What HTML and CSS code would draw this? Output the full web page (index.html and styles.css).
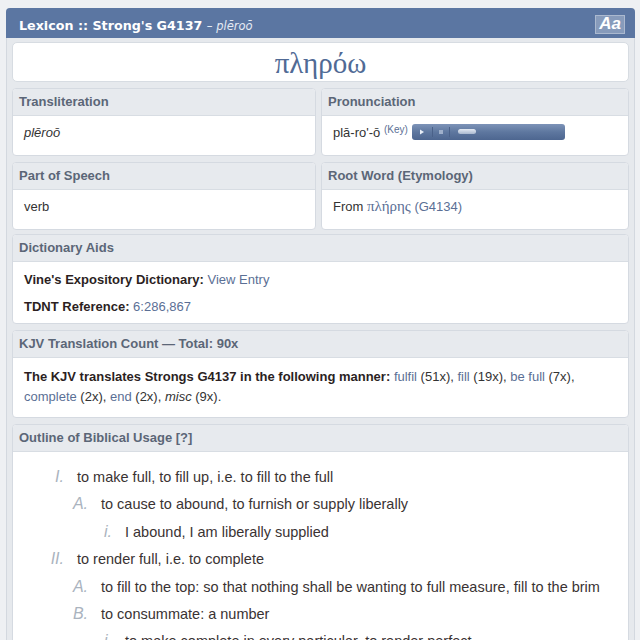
FILE: index.html
```html
<!DOCTYPE html>
<html lang="en">
<head>
<meta charset="utf-8">
<title>Lexicon :: Strong's G4137 - plēroō</title>
<link rel="stylesheet" href="styles.css">
</head>
<body>
<div class="lexicon">
  <div class="lex-head">
    <span class="lex-title">Lexicon :: Strong's G4137 <i class="lex-translit">– plēroō</i></span>
    <span class="aa-btn">Aa</span>
  </div>
  <div class="lex-body">
    <div class="word-card"><span class="greek-word">πληρόω</span></div>

    <div class="grid2">
      <div class="card">
        <div class="card-h">Transliteration</div>
        <div class="card-b"><i>plēroō</i></div>
      </div>
      <div class="card">
        <div class="card-h">Pronunciation</div>
        <div class="card-b">plā-ro'-ō <sup class="key">(Key)</sup>
          <svg class="player" width="153" height="16" viewBox="0 0 153 16">
            <defs>
              <linearGradient id="pg" x1="0" y1="0" x2="0" y2="1">
                <stop offset="0" stop-color="#7d93b8"/>
                <stop offset="0.5" stop-color="#5e779f"/>
                <stop offset="1" stop-color="#4d6690"/>
              </linearGradient>
              <linearGradient id="kg" x1="0" y1="0" x2="0" y2="1">
                <stop offset="0" stop-color="#e4eaf3"/>
                <stop offset="1" stop-color="#a9b8cf"/>
              </linearGradient>
            </defs>
            <rect x="0" y="0" width="153" height="16" rx="3" fill="url(#pg)"/>
            <path d="M8 5.5 L12 8 L8 10.5 Z" fill="#e8eef7"/>
            <line x1="20.5" y1="3" x2="20.5" y2="13" stroke="#4a6189" stroke-width="1"/>
            <rect x="27" y="6" width="4" height="4" fill="#9fb0cb"/>
            <line x1="37.5" y1="3" x2="37.5" y2="13" stroke="#4a6189" stroke-width="1"/>
            <rect x="46" y="5" width="18" height="5" rx="2.5" fill="url(#kg)"/>
          </svg>
        </div>
      </div>
      <div class="card">
        <div class="card-h">Part of Speech</div>
        <div class="card-b">verb</div>
      </div>
      <div class="card">
        <div class="card-h">Root Word (Etymology)</div>
        <div class="card-b">From <a class="link greek-link" href="#">πλήρης</a> <a class="link" href="#">(G4134)</a></div>
      </div>
    </div>

    <div class="card">
      <div class="card-h">Dictionary Aids</div>
      <div class="card-b aids">
        <p><b>Vine's Expository Dictionary:</b> <a class="link" href="#">View Entry</a></p>
        <p><b>TDNT Reference:</b> <a class="link" href="#">6:286,867</a></p>
      </div>
    </div>

    <div class="card">
      <div class="card-h">KJV Translation Count — Total: 90x</div>
      <div class="card-b kjv">
        <b>The KJV translates Strongs G4137 in the following manner:</b> <a class="link" href="#">fulfil</a> (51x), <a class="link" href="#">fill</a> (19x), <a class="link" href="#">be full</a> (7x), <a class="link" href="#">complete</a> (2x), <a class="link" href="#">end</a> (2x), <i>misc</i> (9x).
      </div>
    </div>

    <div class="card">
      <div class="card-h">Outline of Biblical Usage [?]</div>
      <div class="card-b outline">
        <ol class="lvl1">
          <li>to make full, to fill up, i.e. to fill to the full
            <ol class="lvl2">
              <li>to cause to abound, to furnish or supply liberally
                <ol class="lvl3">
                  <li>I abound, I am liberally supplied</li>
                </ol>
              </li>
            </ol>
          </li>
          <li>to render full, i.e. to complete
            <ol class="lvl2">
              <li>to fill to the top: so that nothing shall be wanting to full measure, fill to the brim</li>
              <li>to consummate: a number
                <ol class="lvl3">
                  <li>to make complete in every particular, to render perfect</li>
                </ol>
              </li>
            </ol>
          </li>
        </ol>
      </div>
    </div>
  </div>
</div>
</body>
</html>
```
FILE: styles.css
```css
html, body {
  margin: 0;
  padding: 0;
}
body {
  background: #eef0f3;
  font-family: "Liberation Sans", Arial, sans-serif;
  font-size: 13px;
  color: #333;
  overflow: hidden;
  height: 640px;
}
.lexicon {
  margin: 8px 5px 0 6px;
  border: 1px solid #d3d8df;
  border-top: none;
  border-radius: 4px 4px 0 0;
  background: #e6e9ed;
}
.lex-head {
  height: 30px;
  display: flex;
  align-items: center;
  justify-content: space-between;
  padding: 0 10px 0 13px;
  margin: 0 -1px;
  background: #5b76a2;
  border-radius: 4px 4px 0 0;
  color: #fff;
}
.lex-title {
  font-family: "DejaVu Sans", Verdana, sans-serif;
  font-weight: bold;
  font-size: 12.7px;
  padding-top: 4px;
}
.lex-translit {
  font-size: 11.5px;
  font-weight: normal;
  font-style: italic;
  color: #e4eaf3;
}
.aa-btn {
  display: inline-flex;
  align-items: center;
  justify-content: center;
  width: 28px;
  height: 17px;
  background: rgba(255, 255, 255, 0.27);
  border: 1px solid rgba(255, 255, 255, 0.3);
  font-family: "Liberation Sans", Arial, sans-serif;
  font-weight: bold;
  font-style: italic;
  font-size: 17px;
  color: #fff;
  margin-top: 2px;
}
.lex-body {
  padding: 4px 5px 0 5px;
  display: flex;
  flex-direction: column;
  gap: 6px;
}
.word-card {
  background: #fff;
  border: 1px solid #d7dce2;
  border-radius: 5px;
  height: 38px;
  display: flex;
  align-items: center;
  justify-content: center;
}
.greek-word {
  font-family: "Liberation Serif", "Times New Roman", serif;
  font-size: 29px;
  color: #506a95;
  padding-top: 2px;
}
.grid2 {
  display: grid;
  grid-template-columns: 304px 1fr;
  gap: 6px 5px;
  margin-bottom: -2px;
}
.card {
  background: #fff;
  border: 1px solid #d5dae1;
  border-radius: 4px;
  overflow: hidden;
}
.card-h {
  background: #e7eaee;
  border-bottom: 1px solid #d8dde3;
  height: 26px;
  line-height: 26px;
  padding: 0 6px;
  font-weight: bold;
  font-size: 13px;
  color: #5b6677;
}
.card-b {
  padding: 7px 11px 12px 11px;
  line-height: 20px;
}
.key {
  font-size: 10px;
  color: #5b6f95;
  vertical-align: 4px;
  line-height: 0;
}
.player {
  vertical-align: -3px;
  margin-left: 1px;
}
.link {
  color: #5b6f95;
  text-decoration: none;
}
.greek-link {
  font-family: "Liberation Serif", "Times New Roman", serif;
  font-size: 15px;
  line-height: 0;
}
.aids {
  padding-top: 8px;
  padding-bottom: 6px;
}
.aids p {
  margin: 0 0 7px 0;
}
.aids p:last-child {
  margin-bottom: 0;
}
.aids b, .kjv b {
  color: #2c1f1f;
}
.kjv {
  line-height: 20px;
  padding-top: 9px;
  padding-bottom: 10px;
}
.outline {
  padding-top: 12px;
  font-size: 14.5px;
  line-height: 27.4px;
  color: #3a3333;
}
.outline ol {
  list-style: none;
  margin: 0;
  padding: 0 0 0 24px;
  counter-reset: item;
}
.outline ol.lvl1 {
  padding-left: 53px;
}
.outline li {
  counter-increment: item;
}
.outline li::before {
  display: inline-block;
  width: 30px;
  margin-left: -43px;
  margin-right: 13px;
  text-align: right;
  font-style: italic;
  color: #aab3be;
  font-size: 16px;
  line-height: 0;
}
.lvl1 > li::before {
  content: counter(item, upper-roman) ".";
}
.lvl2 > li::before {
  content: counter(item, upper-alpha) ".";
}
.lvl3 > li::before {
  content: counter(item, lower-roman) ".";
}
```
